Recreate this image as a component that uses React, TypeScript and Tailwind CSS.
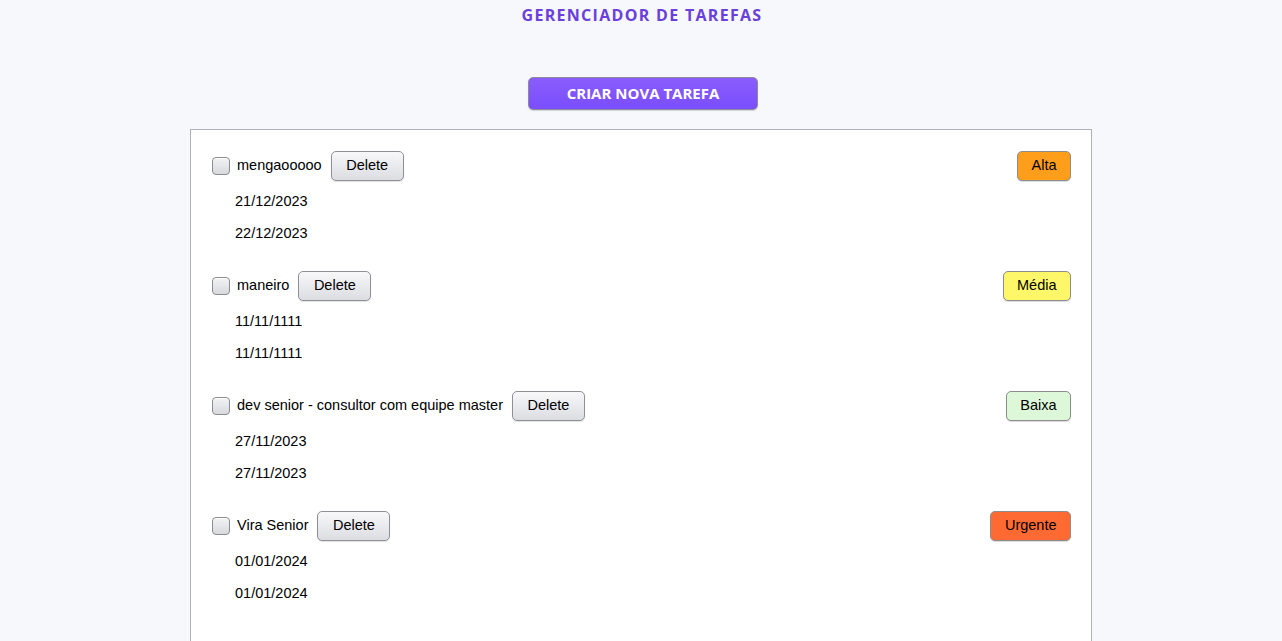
import { useState } from "react";

type Task = {
  id: number;
  title: string;
  start: string;
  end: string;
  priority: "Alta" | "Média" | "Baixa" | "Urgente";
};

const priorityStyle: Record<Task["priority"], string> = {
  Alta: "bg-[#ff9e1b]",
  Média: "bg-[#fff76a]",
  Baixa: "bg-[#dcf8d8]",
  Urgente: "bg-[#ff6a33]",
};

const initialTasks: Task[] = [
  { id: 1, title: "mengaooooo", start: "21/12/2023", end: "22/12/2023", priority: "Alta" },
  { id: 2, title: "maneiro", start: "11/11/1111", end: "11/11/1111", priority: "Média" },
  { id: 3, title: "dev senior - consultor com equipe master", start: "27/11/2023", end: "27/11/2023", priority: "Baixa" },
  { id: 4, title: "Vira Senior", start: "01/01/2024", end: "01/01/2024", priority: "Urgente" },
];

export default function App() {
  const [tasks, setTasks] = useState(initialTasks);
  const [done, setDone] = useState<number[]>([]);

  const toggle = (id: number) =>
    setDone(d => (d.includes(id) ? d.filter(x => x !== id) : [...d, id]));

  return (
    <div className="min-h-[641px] bg-[#f7f8fc] flex flex-col items-center font-['Liberation_Sans',Arial,sans-serif] text-[14.5px] text-black">
      <h1 className="mt-[4px] ml-[2px] h-[22px] leading-[22px] font-['Open_Sans',sans-serif] font-bold text-[16px] tracking-[1.3px] text-[#6940dc]">
        GERENCIADOR DE TAREFAS
      </h1>

      <button className="mt-[51px] ml-[4px] w-[230px] h-[33px] rounded-[5px] border border-[#8d8a9c] bg-gradient-to-b from-[#8a5dfb] to-[#7a4dff] text-white font-['Open_Sans',sans-serif] font-bold text-[15px] shadow-[0_1px_1px_rgba(0,0,0,0.15)]">
        CRIAR NOVA TAREFA
      </button>

      {/* Task list panel */}
      <div className="mt-[19px] w-[902px] flex-1 bg-white border-l border-r border-t border-[#aeb0ba] px-[20px] pt-[21px] pb-[20px] flex flex-col gap-[22px]">
        {tasks.map(task => (
          <div key={task.id} className="flex flex-col">
            <div className="flex items-center h-[30px]">
              <input
                type="checkbox"
                checked={done.includes(task.id)}
                onChange={() => toggle(task.id)}
                className="appearance-none w-[18px] h-[18px] ml-[1px] rounded-[4px] border border-[#8b8d94] bg-gradient-to-b from-[#f3f3f5] to-[#d8d9de] shadow-[inset_0_1px_0_#fff] checked:bg-[#7a4dff]"
              />
              <span className="ml-[7px] mr-[9px]">{task.title}</span>
              <button
                onClick={() => setTasks(t => t.filter(x => x.id !== task.id))}
                className="h-[30px] px-[14.5px] rounded-[5px] border border-[#8f9096] bg-gradient-to-b from-[#f8f8fa] to-[#dcdde2] shadow-[0_1px_1px_rgba(0,0,0,0.12)]"
              >
                Delete
              </button>
              <button
                className={`ml-auto h-[30px] px-[13.5px] rounded-[5px] border border-[#8d8d8d] shadow-[0_1px_1px_rgba(0,0,0,0.15)] ${priorityStyle[task.priority]}`}
              >
                {task.priority}
              </button>
            </div>
            <div className="ml-[24px] mt-[4px] h-[32px] leading-[32px]">{task.start}</div>
            <div className="ml-[24px] h-[32px] leading-[32px]">{task.end}</div>
          </div>
        ))}
      </div>
    </div>
  );
}
